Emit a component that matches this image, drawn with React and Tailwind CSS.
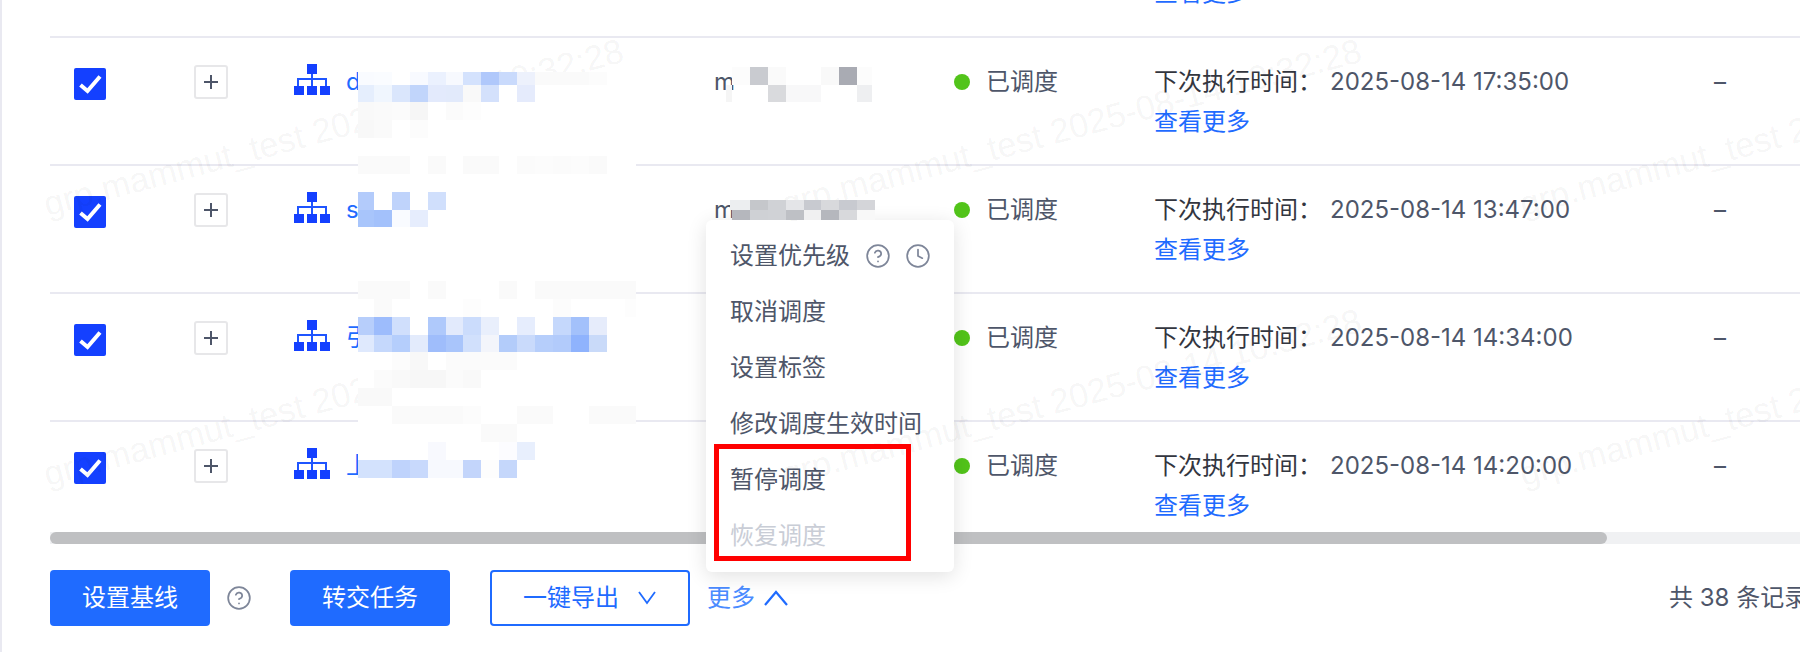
import { CircleHelp, Clock } from 'lucide-react'

const rows = [
  { name: 'd', owner: 'm', time: '2025-08-14 17:35:00' },
  { name: 's', owner: 'm', time: '2025-08-14 13:47:00' },
  { name: '引', owner: 'm', time: '2025-08-14 14:34:00' },
  { name: '上', owner: 'm', time: '2025-08-14 14:20:00' },
]

const menu = ['取消调度', '设置标签', '修改调度生效时间', '暂停调度']

const watermarks = [
  'left-[47px] top-[186px]',
  'left-[785px] top-[186px]',
  'left-[1523px] top-[186px]',
  'left-[47px] top-[456px]',
  'left-[785px] top-[456px]',
  'left-[1523px] top-[456px]',
]

// mosaic columns, the blurred names
const colX = [0, 16, 34, 52, 70, 88, 105, 123, 141, 159, 177, 195, 213, 231, 249, 267, 278]

const nameMosaic = [
  [0, 13, ['f9fbff', 'fafcff', '', 'f8faff', 'ebf1fe', 'f7f9fe', 'd4e2fd', 'b0c8fb', 'c9dafc', 'edf1fc', 'fafafa', 'fafafa', 'fafafa', 'fcfcfc']],
  [13, 17, ['e5eefd', 'f0f6fe', 'dae6fc', 'c1d5fb', 'e3eafc', 'e2eafb', 'f9f9f9', 'd4e1fc', '', 'e5ebfc']],
  [30, 18, ['f9f9f9', 'fafafa', 'fbfbfb', 'f6f6f6', '', 'fbfbfb', 'fdfdfd']],
  [48, 18, ['f8f8f8', 'fafafa', '', 'fcfcfc']],
  [84, 18, ['fafafa', 'fafafa', 'fafafa', '', 'fafafa', '', 'fafafa', 'fafafa', '', 'fbfbfb', 'fcfcfc', 'fbfbfb', 'fcfcfc', 'fafafa']],
  [120, 18, ['b3cbfb', '', 'bfd3fb', '', 'd0dffc']],
  [138, 17, ['a8c5fb', 'a3c1fb', 'f9fbff', 'e6edfd']],
  [209, 18, ['fafafa', 'fafafa', 'fafafa', '', 'fafafa', '', '', '', 'fafafa', '', 'fafafa', 'fafafa', 'fafafa', 'fafafa', 'fafafa', 'fafafa']],
  [227, 18, ['', 'fafafa', '', '', '', '', 'fdfdfd', '', '', '', '', 'fcfcfc', '', '', '', 'fdfdfd']],
  [245, 18, ['b7cefb', '9dbcfc', 'd0dffc', '', 'afc9fb', 'e2eafc', 'cbdcfc', 'e9effc', '', 'e6edfd', '', 'c5d8fc', 'a3c1fb', 'e6ecfb']],
  [263, 17, ['dfe9fd', 'c5d8fc', 'b5cefc', 'e3ebfc', '9fbdfb', 'a9c5fb', 'd1e0fc', 'f3f5fb', 'b3ccfa', 'c9dafb', 'b6cefb', 'b2cbfb', '8fb3fd', 'c9daf9']],
  [280, 18, ['', '', 'fcfcfc', 'f8f8f8', '', 'fbfbfb', 'fbfbfb', 'fbfbfb', 'fbfbfb']],
  [298, 18, ['', 'fbfbfb', 'f9f9f9', 'f7f7f7', 'f7f7f7', 'fbfbfb', 'f9f9f9']],
  [316, 18, ['f9f9f9', 'f9f9f9']],
  [334, 18, ['', '', 'fafafa', 'fafafa', 'fafafa', 'fafafa', 'fcfcfc', '', '', 'fafafa', 'fafafa', '', '', 'fafafa', 'fafafa', 'fafafa']],
  [352, 18, ['', '', '', '', '', '', '', 'fafafa', 'fafafa']],
  [370, 18, ['', '', '', '', 'f8f9fe', '', '', '', 'fcfcff', 'e8effd']],
  [388, 18, ['d3e2fd', 'd3e2fd', 'bfd3fc', 'c8d9fc', 'f7f9fe', 'f7f9fe', 'c3d5fb', 'fdfdfd', 'c5d7fb']],
]

const ownerMosaicA = [
  [732, 67, 18, 'fcfcfc'], [750, 67, 18, 'c9cbd0'], [768, 67, 18, 'fafafa'], [821, 67, 18, 'f9f9f9'], [839, 67, 18, 'a9abb3'], [857, 67, 15, 'fcfcfc'],
  [726, 85, 6, 'f5f5f5'], [768, 85, 18, 'd9dadd'], [786, 85, 35, 'f8f8f9'], [857, 85, 15, 'eeeff1'],
]

const ownerMosaicB = [
  [730, 200, 20, 'eceef0'], [750, 200, 18, 'c5c7cb'], [768, 200, 18, 'd0d2d6'], [786, 200, 18, 'e4e5e8'], [804, 200, 17, 'c8cad0'], [821, 200, 18, 'd8d9dc'], [839, 200, 18, 'c8cad0'], [857, 200, 18, 'd4d5d9'],
  [732, 210, 18, 'b5b7bd'], [750, 210, 18, 'cfd1d5'], [768, 210, 18, 'd0d2d6'], [786, 210, 18, 'bec0c5'], [804, 210, 17, 'f0f0f1'], [821, 210, 18, 'b5b7bd'], [839, 210, 18, 'd8d9dc'], [857, 210, 18, 'f8f8f8'],
]

function TreeIcon() {
  return (
    <svg width="36" height="31" viewBox="0 0 36 31" className="-mt-[2px] shrink-0">
      <rect x="13" y="0" width="10" height="10" fill="#1440ff" />
      <path d="M18 10V22M4 22V15H32V22" fill="none" stroke="#1f55ff" strokeWidth="2" />
      <rect x="0" y="22" width="10" height="9" fill="#1440ff" />
      <rect x="13" y="22" width="10" height="9" fill="#1440ff" />
      <rect x="26" y="22" width="10" height="9" fill="#1440ff" />
    </svg>
  )
}

function Row({ row, last }) {
  return (
    <div
      className={`grid grid-cols-[144px_100px_420px_240px_200px_560px_86px] ${
        last ? 'h-[110px]' : 'h-[128px] border-b-2 border-[#e9e9f1]'
      } pt-[28px] text-2xl leading-8 text-[#4e5669]`}
    >
      <div className="pl-6">
        <div className="mt-[2px] flex h-8 w-8 items-center justify-center rounded-[2px] bg-[#1440ff]">
          <svg width="32" height="32" viewBox="0 0 32 32">
            <path d="M6.5 20L13.5 26L26 11.5" fill="none" stroke="#fff" strokeWidth="4" transform="translate(0 -3)" />
          </svg>
        </div>
      </div>
      <div>
        <div className="-mt-[1px] flex h-[34px] w-[34px] items-center justify-center rounded-[3px] border-2 border-[#e7e7e9]">
          <svg width="14" height="14" viewBox="0 0 14 14">
            <path d="M7 0V14M0 7H14" stroke="#4e5669" strokeWidth="2" />
          </svg>
        </div>
      </div>
      <div className="flex gap-4">
        <TreeIcon />
        <span className="text-[#1f6bff]">{row.name}</span>
      </div>
      <div>{row.owner}</div>
      <div className="flex items-start gap-4">
        <span className="mt-2 h-4 w-4 rounded-full bg-[#52c41a]" />
        <span>已调度</span>
      </div>
      <div>
        <div className="flex whitespace-nowrap">
          <span className="w-[176px] shrink-0 text-[#33363f]">下次执行时间：</span>
          <span>{row.time}</span>
        </div>
        <div className="mt-2 text-[#1f6bff]">查看更多</div>
      </div>
      <div>–</div>
    </div>
  )
}

export default function App() {
  return (
    <div className="relative h-[652px] w-[1800px] overflow-hidden border-l-2 border-[#e9e9f1] bg-white font-['Inter','Noto_Sans_CJK_SC',sans-serif]">
      <div className="pl-12">
        <div className="relative h-[532px] overflow-hidden">
          {/* tail of the row scrolled out of view */}
          <div className="flex h-[38px] items-end overflow-hidden border-b-2 border-[#e9e9f1] pb-[27px] pl-[1104px] text-2xl leading-8 text-[#1f6bff]">
            <span className="shrink-0">查看更多</span>
          </div>
          {rows.map((row, i) => (
            <Row key={i} row={row} last={i === rows.length - 1} />
          ))}
        </div>

        <div className="h-3 bg-[#f0f1f3]">
          <div className="h-3 w-[1557px] rounded-md bg-[#bfc0c2]" />
        </div>

        <div className="mt-[26px] flex h-14 items-center text-2xl whitespace-nowrap">
          <button className="h-14 w-40 shrink-0 rounded bg-[#1f6bff] text-white">设置基线</button>
          <CircleHelp className="ml-4 shrink-0 text-[#7e8699]" size={26} strokeWidth={1.6} />
          <button className="ml-[38px] h-14 w-40 shrink-0 rounded bg-[#1f6bff] text-white">转交任务</button>
          <button className="ml-10 flex h-14 w-[200px] shrink-0 items-center rounded border-2 border-[#1f6bff] pl-[31px] text-[#1f6bff]">
            一键导出
            <svg width="18" height="14" viewBox="0 0 18 14" className="ml-[19px]">
              <path d="M1 1L9 12L17 1" fill="none" stroke="#1f6bff" strokeWidth="1.8" />
            </svg>
          </button>
          <span className="ml-[17px] shrink-0 text-[#4a8bff]">更多</span>
          <svg width="24" height="16" viewBox="0 0 24 16" className="ml-[9px] shrink-0">
            <path d="M1 15L12 2L23 15" fill="none" stroke="#1f6bff" strokeWidth="2.2" />
          </svg>
          <span className="ml-[881px] shrink-0 text-[#4e5669]">共 38 条记录</span>
        </div>
      </div>

      {/* dropdown of 更多 */}
      <div className="absolute left-[704px] top-[220px] z-10 w-[248px] rounded-md bg-white py-2 pl-6 text-2xl leading-[56px] text-[#4e5669] shadow-[0_4px_20px_rgba(0,0,0,0.12)]">
        <div className="flex h-14 items-center">
          设置优先级
          <CircleHelp className="ml-[15px] text-[#7e8699]" size={26} strokeWidth={1.6} />
          <Clock className="ml-[14px] text-[#7e8699]" size={26} strokeWidth={1.6} />
        </div>
        {menu.map((item) => (
          <div key={item} className="h-14">{item}</div>
        ))}
        <div className="h-14 text-[#c9cdd6]">恢复调度</div>
      </div>

      {/* watermark lies over table and dropdown */}
      <div className="pointer-events-none absolute inset-x-0 top-0 z-20 h-[532px] overflow-hidden">
        {watermarks.map((pos) => (
          <span
            key={pos}
            className={`absolute ${pos} origin-bottom-left -rotate-[15deg] whitespace-nowrap font-['Liberation_Sans',sans-serif] text-[34.5px] leading-9 text-black/[0.05]`}
          >
            grp.mammut_test 2025-08-14 10:32:28
          </span>
        ))}
      </div>

      {/* mosaic over the names */}
      <svg width="278" height="420" className="absolute left-[356px] top-[72px] z-30 bg-white">
        {nameMosaic.map(([y, h, cells]) =>
          cells.map((c, i) =>
            c ? <rect key={`${y}-${i}`} x={colX[i]} y={y} width={colX[i + 1] - colX[i]} height={h} fill={`#${c}`} /> : null
          )
        )}
      </svg>

      {/* mosaic over the owners */}
      <svg width="1800" height="220" className="pointer-events-none absolute left-[-2px] top-0 z-30">
        {[...ownerMosaicA, ...ownerMosaicB].map(([x, y, w, c]) => (
          <rect key={`${x}-${y}`} x={x} y={y} width={w} height={y >= 200 ? 10 : y === 67 ? 18 : 17} fill={`#${c}`} />
        ))}
      </svg>

      {/* red annotation box */}
      <div className="absolute left-[712px] top-[444px] z-40 h-[117px] w-[197px] border-[5px] border-[#ff0000]" />
    </div>
  )
}
